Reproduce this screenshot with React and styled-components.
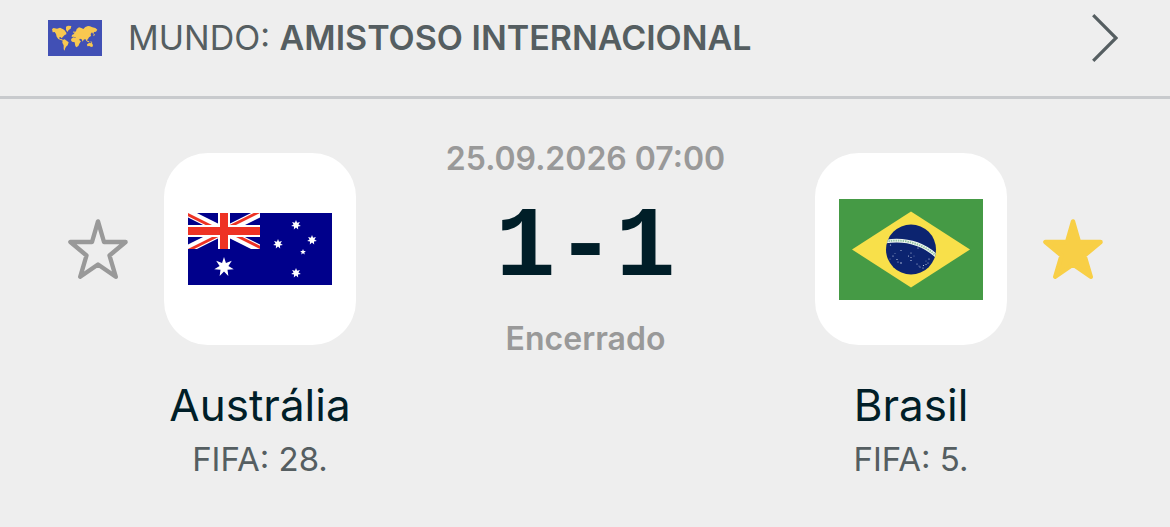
import React, { useState } from "react";
import styled, { createGlobalStyle } from "styled-components";

const GlobalStyle = createGlobalStyle`
  * {
    box-sizing: border-box;
    margin: 0;
    padding: 0;
  }

  body {
    background-color: #eeeeee;
    font-family: Inter, "Liberation Sans", sans-serif;
    color: #001e28;
  }
`;

const LeagueLink = styled.a`
  display: flex;
  align-items: center;
  gap: 26px;
  padding: 14px 52px 34px 48px;
  border-bottom: 3px solid #c8cacd;
  color: #555e61;
  text-decoration: none;

  svg {
    flex: none;
  }
`;

const LeagueTitle = styled.span`
  flex: 1;
  font-size: 34px;
  line-height: 48px;
`;

const LeagueName = styled.strong`
  font-weight: 600;
`;

const Match = styled.main`
  display: flex;
  align-items: flex-start;
  gap: 36px;
  padding: 40px 67px 40px 68px;
`;

const StarButton = styled.button`
  flex: none;
  display: flex;
  align-items: center;
  height: 220px;
  border: none;
  background: none;
  cursor: pointer;
  color: ${({ $active }) => ($active ? "#f8cf46" : "#999999")};
`;

const Team = styled.section`
  flex: none;
  width: 192px;
  padding-top: 14px;
  display: flex;
  flex-direction: column;
  align-items: center;
`;

const FlagCard = styled.div`
  display: flex;
  align-items: center;
  justify-content: center;
  width: 192px;
  height: 192px;
  border-radius: 44px;
  background-color: #ffffff;
`;

const TeamName = styled.h2`
  margin-top: 34px;
  font-size: 44px;
  font-weight: 400;
  line-height: 52px;
`;

const Rank = styled.p`
  margin-top: 8px;
  font-size: 33px;
  line-height: 40px;
  color: #555e61;
`;

const Result = styled.section`
  flex: 1;
  display: flex;
  flex-direction: column;
  align-items: center;
  white-space: nowrap;
`;

const Info = styled.p`
  font-size: 32px;
  font-weight: 600;
  line-height: 40px;
  color: #999999;
`;

const Score = styled.h1`
  margin: 22px 0;
  font-family: "Liberation Mono", "DejaVu Sans Mono", monospace;
  font-size: 100px;
  font-weight: 700;
  line-height: 96px;
  color: #001e28;
`;

const starPoints = (cx, cy, r, tips, ratio) =>
  Array.from({ length: tips * 2 }, (_, i) => {
    const radius = i % 2 ? r * ratio : r;
    const angle = (Math.PI * i) / tips - Math.PI / 2;
    return `${cx + radius * Math.cos(angle)},${cy + radius * Math.sin(angle)}`;
  }).join(" ");

const WorldFlag = () => (
  <svg width="54" height="36" viewBox="0 0 162 108" aria-hidden="true">
    <path fill="#4150b5" d="M0 0h162v108H0z" />
    <g fill="#f8c850">
      <path d="M12 27L17 24L27 26L36 23L44 27L49 30L55 38L55 43L50 45L45 50L41 55L37 51L33 53L36 57L43 58L45 62L38 60L31 57L26 50L24 42L20 36L14 37Z" />
      <path d="M54 20L60 17L70 18L68 26L62 30L58 36L54 29Z" />
      <path d="M44 60L50 58L56 62L62 67L59 76L54 80L51 86L50 92L47 88L47 76L43 68Z" />
      <path d="M71 51L72 45L78 42L80 36L84 34L86 27L93 22L100 24L106 27L112 21L120 18L126 19L133 22L142 24L148 29L144 35L138 36L136 43L132 37L128 42L129 48L123 52L120 57L117 60L119 66L115 62L112 57L107 59L104 65L101 58L96 56L92 61L87 57L82 52L76 50Z" />
      <path d="M70 56L76 52L86 54L92 56L96 62L99 63L94 71L91 78L85 82L82 78L80 67L72 65L69 61Z" />
      <path d="M117 73L124 68L127 70L130 67L135 75L133 81L128 80L124 78L118 79Z" />
      <path d="M117 62L122 63L125 67L119 66ZM127 64L133 66L132 68L128 67ZM138 41L141 44L137 49L136 46ZM77 33L80 35L79 40L76 39Z" />
    </g>
  </svg>
);

const southernCross = [
  [108, 12],
  [90, 31],
  [124, 27],
  [108, 60],
];

const AustraliaFlag = () => (
  <svg width="144" height="72" viewBox="0 0 144 72" role="img" aria-label="Austrália">
    <clipPath id="canton">
      <path d="M0 0h72v36H0z" />
    </clipPath>
    <clipPath id="saltire">
      <path d="M36 18H72V36zM36 18V36H0zM36 18H0V0zM36 18V0H72z" />
    </clipPath>
    <path fill="#00008b" d="M0 0h144v72H0z" />
    <g clipPath="url(#canton)">
      <path d="M0 0l72 36M72 0L0 36" stroke="#fff" strokeWidth="8" />
      <path
        d="M0 0l72 36M72 0L0 36"
        stroke="#ee3224"
        strokeWidth="5.6"
        clipPath="url(#saltire)"
      />
      <path d="M36 0v36M0 18h72" stroke="#fff" strokeWidth="12" />
      <path d="M36 0v36M0 18h72" stroke="#ee3224" strokeWidth="8" />
    </g>
    <g fill="#fff">
      <polygon points={starPoints(36, 54, 10, 7, 0.45)} />
      {southernCross.map(([x, y]) => (
        <polygon key={`${x}-${y}`} points={starPoints(x, y, 5, 7, 0.5)} />
      ))}
      <polygon points={starPoints(115, 39, 3, 5, 0.45)} />
    </g>
  </svg>
);

const skyStars = [
  [51.5, 46, 0.6],
  [62, 51.5, 0.5],
  [54, 57, 0.6],
  [51, 60, 0.4],
  [56, 54.5, 0.4],
  [58, 60.5, 0.6],
  [59, 63, 0.5],
  [62, 64, 0.7],
  [72, 54, 0.5],
  [69.5, 57, 0.5],
  [72, 58.5, 0.5],
  [75, 57, 0.4],
  [72, 61.5, 0.6],
  [79, 49, 0.6],
  [90, 60, 0.6],
  [89, 64, 0.5],
  [87, 65.5, 0.5],
  [84.5, 66.5, 0.6],
  [84, 69, 0.5],
  [81, 68, 0.5],
  [78, 65, 0.5],
  [80, 67, 0.4],
  [87, 62, 0.4],
];

const BrazilFlag = () => (
  <svg width="144" height="101" viewBox="0 0 144 101" role="img" aria-label="Brasil">
    <clipPath id="globe">
      <circle cx="72" cy="50.5" r="25" />
    </clipPath>
    <path fill="#459a45" d="M0 0h144v101H0z" />
    <path fill="#f8e04a" d="M13 50.5L72 12.5l59 38-59 38z" />
    <circle cx="72" cy="50.5" r="25" fill="#0c2470" />
    <g clipPath="url(#globe)" fill="none">
      <circle cx="57.6" cy="101" r="59.4" stroke="#edf5ee" strokeWidth="3.6" />
      <circle
        cx="57.6"
        cy="101"
        r="59.4"
        stroke="#8fc2a0"
        strokeWidth="1.8"
        strokeDasharray="1.4 1"
      />
    </g>
    <g fill="#dfe6f5">
      {skyStars.map(([x, y, r]) => (
        <circle key={`${x}-${y}`} cx={x} cy={y} r={r} />
      ))}
    </g>
  </svg>
);

const StarIcon = ({ filled }) => (
  <svg width="60" height="61" viewBox="0 0 60 61" aria-hidden="true">
    <path
      d="M30 2.4L36 23H57.6L41.5 36.5L47.8 57.8L30 45.5L12.2 57.8L18.5 36.5L2.4 23H24Z"
      fill={filled ? "currentColor" : "none"}
      stroke="currentColor"
      strokeWidth="4.4"
      strokeLinejoin="round"
    />
  </svg>
);

const ChevronIcon = () => (
  <svg width="26" height="48" viewBox="0 0 26 48" aria-hidden="true">
    <path d="M1.2 1.2L24 24L1.2 46.8" fill="none" stroke="currentColor" strokeWidth="3.2" />
  </svg>
);

const Favorite = ({ team, initial }) => {
  const [active, setActive] = useState(initial);

  return (
    <StarButton
      type="button"
      $active={active}
      aria-pressed={active}
      aria-label={`Favorito: ${team}`}
      onClick={() => setActive(!active)}
    >
      <StarIcon filled={active} />
    </StarButton>
  );
};

const TeamInfo = ({ name, rank, children }) => (
  <Team>
    <FlagCard>{children}</FlagCard>
    <TeamName>{name}</TeamName>
    <Rank>FIFA: {rank}.</Rank>
  </Team>
);

const App = () => (
  <>
    <GlobalStyle />
    <LeagueLink href="#amistoso-internacional">
      <WorldFlag />
      <LeagueTitle>
        MUNDO: <LeagueName>AMISTOSO INTERNACIONAL</LeagueName>
      </LeagueTitle>
      <ChevronIcon />
    </LeagueLink>
    <Match>
      <Favorite team="Austrália" initial={false} />
      <TeamInfo name="Austrália" rank={28}>
        <AustraliaFlag />
      </TeamInfo>
      <Result>
        <Info>25.09.2026 07:00</Info>
        <Score>1-1</Score>
        <Info>Encerrado</Info>
      </Result>
      <TeamInfo name="Brasil" rank={5}>
        <BrazilFlag />
      </TeamInfo>
      <Favorite team="Brasil" initial={true} />
    </Match>
  </>
);

export default App;
